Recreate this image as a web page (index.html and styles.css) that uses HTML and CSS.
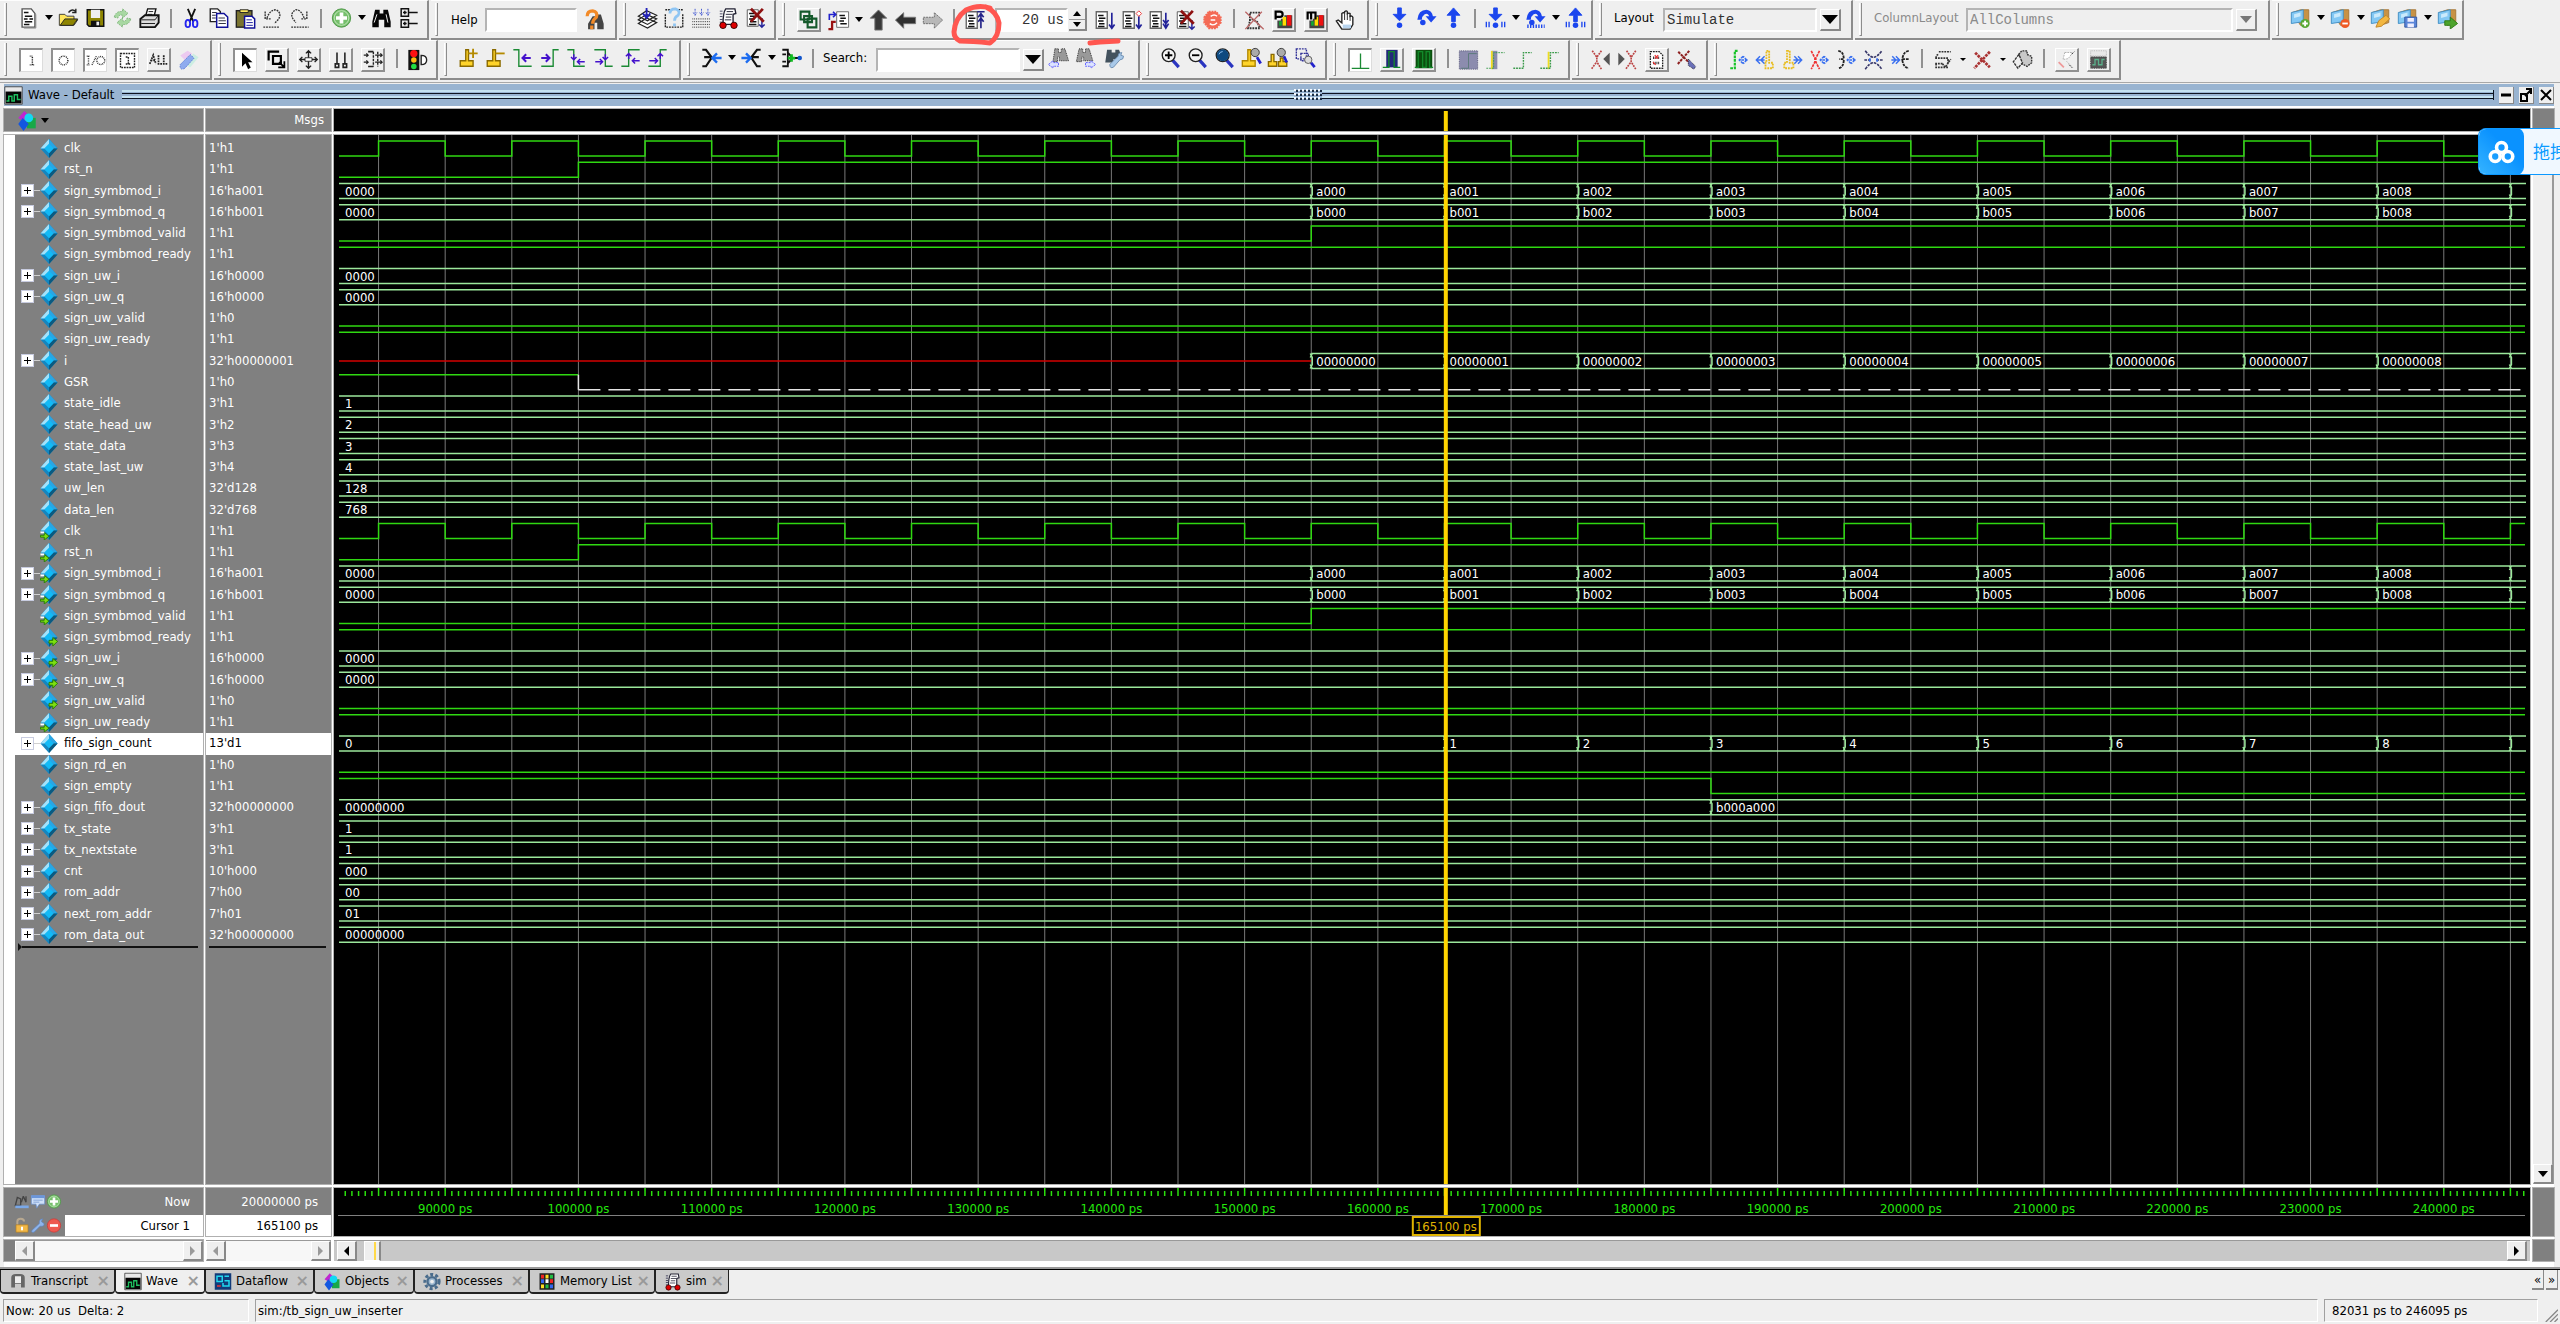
FILE: index.html
```html
<!DOCTYPE html>
<html lang="en">
<head>
<meta charset="utf-8">
<title>Wave - Default</title>
<link rel="stylesheet" href="styles.css">
</head>
<body>
<svg class="defs" aria-hidden="true">
  <symbol id="doc" viewBox="0 0 24 24"><path d="M5 2h10l4 5v15H5z" fill="#fff" stroke="#555" stroke-width="1.5"/><path d="M20 8v15H7" stroke="#888" fill="none"/><path d="M7 6h5M8 10h8M7 13h4m2 0h4M8 16h8M7 19h6" stroke="#111" stroke-width="1.6"/></symbol>
  <symbol id="open" viewBox="0 0 24 24"><path d="M2 20V8h6l2 2h8v4h4l-4 6z" fill="#ffe65a" stroke="#333"/><path d="M3 20l5-7h14l-5 7z" fill="#8d8400" stroke="#222"/><path d="M12 6q4-5 8-1m0-3v4h-4" fill="none" stroke="#222" stroke-width="1.5"/></symbol>
  <symbol id="save" viewBox="0 0 24 24"><path d="M3 3h18v18H5l-2-2z" fill="#8d8400" stroke="#111" stroke-width="1.6"/><path d="M7 3h10v9H7z" fill="#eee"/><path d="M7 15h10v6H7z" fill="#111"/><path d="M13 16h3v4h-3z" fill="#eee"/></symbol>
  <symbol id="reload" viewBox="0 0 24 24"><path d="M3 11q2-7 9-6V2l6 5-6 5V9q-4-1-5 3zM21 13q-2 7-9 6v3l-6-5 6-5v3q4 1 5-3z" fill="#a8d8a2" stroke="#7eb57a" stroke-dasharray="2 1"/></symbol>
  <symbol id="print" viewBox="0 0 24 24"><path d="M8 9l2-7h9l-2 8z" fill="#fff" stroke="#111" stroke-width="1.5"/><path d="M2 13l5-4h15v8l-4 5H2z" fill="#ddd" stroke="#111" stroke-width="2"/><path d="M3 14h15l3-4M3 18h15M11 5h5m-6 3h5" stroke="#111" fill="none"/></symbol>
  <symbol id="cut" viewBox="0 0 24 24"><path d="M8 2l6 14M16 2l-6 14" stroke="#111" stroke-width="2"/><ellipse cx="8" cy="18" rx="2.500" ry="4" fill="none" stroke="#22e" stroke-width="2"/><ellipse cx="16" cy="18" rx="2.500" ry="4" fill="none" stroke="#22e" stroke-width="2"/></symbol>
  <symbol id="copy" viewBox="0 0 24 24"><path d="M3 2h8l3 3v11H3z" fill="#fff" stroke="#222" stroke-width="1.500"/><path d="M10 7h8l4 4v11H10z" fill="#fff" stroke="#119" stroke-width="1.600"/><path d="M5 6h5M5 9h4M5 12h4M12 12h7M12 15h8M12 18h8" stroke="#223"/></symbol>
  <symbol id="paste" viewBox="0 0 24 24"><rect x="2" y="4" width="17" height="18" fill="#7a7430" stroke="#222" stroke-width="1.500"/><path d="M6 6V3h9v3z" fill="#ffea60" stroke="#222"/><path d="M11 10h8l3 3v10H11z" fill="#fff" stroke="#119" stroke-width="1.600"/><path d="M13 14h6M13 17h7M13 20h7" stroke="#119"/></symbol>
  <symbol id="undo" viewBox="0 0 24 24"><path d="M6 12q3-9 10-9 7 4 2 11l-4 4M4 5v8h6M2 22h17" fill="none" stroke="#333" stroke-width="1.500" stroke-dasharray="2 1"/></symbol>
  <symbol id="redo" viewBox="0 0 24 24"><path d="M17 12q-3-9-9-9-7 4-3 10l3 4M20 5v8h-6M3 22h19" fill="none" stroke="#333" stroke-width="1.500" stroke-dasharray="2 1"/></symbol>
  <symbol id="add" viewBox="0 0 24 24"><circle cx="12" cy="12" r="10" fill="#76bf6c" stroke="#4b9645"/><circle cx="12" cy="12" r="8" fill="none" stroke="#c4e8bd"/><path d="M12 6v12M6 12h12" stroke="#fff" stroke-width="4"/></symbol>
  <symbol id="find" viewBox="0 0 24 24"><path d="M5 3h5v4h4V3h5l3 13v6h-7v-8H9v8H2v-6z" fill="#050505"/><path d="M7 8l-3 9m13-9l2 9" stroke="#fff"/></symbol>
  <symbol id="tree" viewBox="0 0 24 24"><path d="M4 2h8v8H4zM4 14h8v8H4zM12 6h10M12 18h10M8 4v4M6 6h4M8 16v4M6 18h4" fill="none" stroke="#111" stroke-width="1.600"/></symbol>
  <symbol id="findhelp" viewBox="0 0 24 24"><path d="M10 8h4V6h5l3 10v6h-7v-7h-3v7H5v-6z" fill="#444"/><path d="M4 8q0-6 6-6 6 1 4 7-4 3-4 7m-1 2v4" fill="none" stroke="#f28a28" stroke-width="3.500"/></symbol>
  <symbol id="stack" viewBox="0 0 24 24"><path d="M2 18l9-6 11 5-10 6zM2 14l9-6 11 5-10 6zM2 10l9-6 11 5-10 6z" fill="#fff" stroke="#222" stroke-width="1.300"/><path d="M11 1v10m-4-4l4 5 4-5" stroke="#22b" fill="none" stroke-width="2"/></symbol>
  <symbol id="dq" viewBox="0 0 24 24"><path d="M2 8v14h19V8M2 3h6M16 3h6" fill="none" stroke="#222" stroke-dasharray="2 1" stroke-width="1.500"/><path d="M7 7q0-5 6-5 6 2 3 7-4 2-4 6m0 3v3" fill="none" stroke="#8fc5f3" stroke-width="3"/></symbol>
  <symbol id="gridarrows" viewBox="0 0 24 24"><path d="M5 2v7M12 2v7M19 2v7M3 6l2 3 2-3m3 0l2 3 2-3m3 0l2 3 2-3" fill="none" stroke="#3a50d0" stroke-dasharray="2 1"/><path d="M2 13h20M2 16h20M2 19h20M2 22h20" stroke="#222" stroke-dasharray="1 1"/></symbol>
  <symbol id="car" viewBox="0 0 24 24"><path d="M9 2h10l1 5-3 1v11H6q0-13 3-17z" fill="#fff" stroke="#223" stroke-width="1.500"/><path d="M10 5h7M9 8h7M9 11h6M8 14h7" stroke="#223"/><path d="M4 4v14" stroke="#224" stroke-dasharray="1 2" stroke-width="3"/><circle cx="6" cy="20" r="3.500" fill="#d00" stroke="#300"/><circle cx="18" cy="20" r="3.500" fill="#d00" stroke="#300"/></symbol>
  <symbol id="docx" viewBox="0 0 24 24"><path d="M3 3h12v18H3z" fill="#fff" stroke="#555"/><path d="M5 7h6M6 10h7M5 13h6M6 16h7M5 19h8" stroke="#111" stroke-width="1.600"/><path d="M19 12v10m-3-3l3 3 3-3" stroke="#229" fill="none" stroke-width="1.600"/><path d="M7 2l14 14M20 2L7 16" stroke="#8e1010" stroke-width="3"/></symbol>
  <symbol id="boxes" viewBox="0 0 24 24"><path d="M3 3h10v9H3zM11 11h10v10H11zM7 8h9v7H7z" fill="none" stroke="#155a2c" stroke-width="2.400"/></symbol>
  <symbol id="sigdoc" viewBox="0 0 24 24"><path d="M10 3h13v17H10z" fill="#fff" stroke="#666"/><path d="M13 7h6M14 10h6M13 13h5M14 16h7" stroke="#111" stroke-width="1.600"/><path d="M2 12V6h6m-2-3l3 3-3 3" stroke="#22c" fill="none" stroke-width="1.800"/><path d="M1 22h4v-8h4" stroke="#911" fill="none" stroke-width="2.500"/></symbol>
  <symbol id="up" viewBox="0 0 24 24"><path d="M12 1l9 9h-5v13H8V10H3z" fill="#383838" stroke="#777"/></symbol>
  <symbol id="left" viewBox="0 0 24 24"><path d="M1 12l9-8v5h13v7H10v5z" fill="#303030" stroke="#777"/></symbol>
  <symbol id="right" viewBox="0 0 24 24"><path d="M23 12l-9-8v5H2v7h12v5z" fill="#b8b8b8" stroke="#666" stroke-dasharray="2 1"/></symbol>
  <symbol id="page" viewBox="0 0 24 24"><path d="M3 3h12v18H3z" fill="#fff" stroke="#666" stroke-width="1.500"/><path d="M5 7h6M6 10h7M5 13h6M6 16h6M5 19h7" stroke="#111" stroke-width="1.600"/></symbol>
  <symbol id="restart" viewBox="0 0 24 24"><use href="#page"/><path d="M19 21V5M15 3h8M16 9l3-4 3 4M16 14l3-4 3 4" stroke="#228" fill="none" stroke-width="1.800"/></symbol>
  <symbol id="run" viewBox="0 0 24 24"><use href="#page"/><path d="M20 4v17m-3-4l3 4 3-4" stroke="#229" fill="none" stroke-width="1.800"/></symbol>
  <symbol id="runc" viewBox="0 0 24 24"><use href="#page"/><path d="M20 8v13m-3-4l3 4 3-4" stroke="#229" fill="none" stroke-width="1.800"/><path d="M20 2l3 3-3 3-3-3z" fill="#fff" stroke="#e33"/></symbol>
  <symbol id="runall" viewBox="0 0 24 24"><use href="#page"/><path d="M20 4v17m-3-9l3 4 3-4m-6 4l3 5 3-5" stroke="#229" fill="none" stroke-width="1.800"/></symbol>
  <symbol id="stop" viewBox="0 0 24 24"><path d="M8 3h8l5 6v6l-5 6H8l-5-6V9z" fill="#f46a55" stroke="#f46a55" stroke-dasharray="2 1" stroke-width="2"/><path d="M17 8q-3-3-7 0m0 4h5m-6 4q4 3 8-1" stroke="#fff" fill="none" stroke-width="1.500"/></symbol>
  <symbol id="noprof" viewBox="0 0 24 24"><path d="M17 8V4H7v9l-2 8h13l-3-7-6-3" fill="none" stroke="#333" stroke-width="2" stroke-dasharray="2 1"/><path d="M2 3l20 19M20 3L2 22" stroke="#b66" stroke-width="1.400"/></symbol>
  <symbol id="bars" viewBox="0 0 24 24"><path d="M5 13h4v-2h4V7h9v15H5z" fill="#444"/><path d="M7 14h3v5H7z" fill="#1a3"/><path d="M11 9h4v10h-4z" fill="#fd0"/><path d="M16 7h5v12h-5z" fill="#e11"/></symbol>
  <symbol id="profp" viewBox="0 0 24 24"><use href="#bars"/><path d="M3 12V3h5q3 0 3 3t-3 3H4" stroke="#000" fill="none" stroke-width="2.500"/></symbol>
  <symbol id="profm" viewBox="0 0 24 24"><use href="#bars"/><path d="M3 12V4h9v8M7 4v8" stroke="#000" fill="none" stroke-width="2.500"/></symbol>
  <symbol id="hand" viewBox="0 0 24 24"><path d="M8 22L2 13l2-1 4 3V5q2-2 3 0V3q2-2 3 0v2q2-1 3 0v3q2-1 3 1v8l-3 5z" fill="#fff" stroke="#222" stroke-width="1.500"/><path d="M11 5v7M14 5v7M17 7v6" stroke="#222"/><path d="M9 17h9v4H9z" fill="#b8d4ee"/></symbol>
  <symbol id="stepin" viewBox="0 0 24 24"><path d="M10 1h4v7h5l-7 7-7-7h5z" fill="#1c46ee" stroke="#1c46ee"/><circle cx="12" cy="20" r="3" fill="#1c46ee"/></symbol>
  <symbol id="stepover" viewBox="0 0 24 24"><path d="M2 14Q3 3 12 3q6 1 7 7h4l-6 7-6-7h4q-2-4-5-2-3 2-3 6z" fill="#1c46ee"/><circle cx="8" cy="17" r="3" fill="#1c46ee"/></symbol>
  <symbol id="stepout" viewBox="0 0 24 24"><path d="M10 16V9H5l7-8 7 8h-5v7z" fill="#1c46ee" stroke="#1c46ee"/><circle cx="12" cy="20" r="3" fill="#1c46ee"/></symbol>
  <symbol id="ticks" viewBox="0 0 24 24"><path d="M2 16v6M5 16v6M19 16v6M22 16v6" stroke="#1c46ee" stroke-width="1.500"/></symbol>
  <symbol id="stepinc" viewBox="0 0 24 24"><use href="#stepin"/><use href="#ticks"/></symbol>
  <symbol id="stepoverc" viewBox="0 0 24 24"><use href="#stepover"/><path d="M3 21h19" stroke="#1c46ee" stroke-width="4" stroke-dasharray="1.500 1.500"/></symbol>
  <symbol id="stepoutc" viewBox="0 0 24 24"><use href="#stepout"/><use href="#ticks"/></symbol>
  <symbol id="fold" viewBox="0 0 24 24"><path d="M3 6l9-3h9v14l-9 3z" fill="#c79245" stroke="#a57534"/><path d="M2 6l13-3v13L2 18z" fill="#83c8f4" stroke="#3d8cc4"/><path d="M5 8l7-2v4L5 12z" fill="#caeafc"/></symbol>
  <symbol id="fadd" viewBox="0 0 24 24"><use href="#fold"/><circle cx="17" cy="18" r="5" fill="#58a834"/><path d="M17 15v6m-3-3h6" stroke="#fff" stroke-width="2"/></symbol>
  <symbol id="fdel" viewBox="0 0 24 24"><use href="#fold"/><circle cx="17" cy="18" r="5" fill="#ee5a25"/><path d="M14 18h6" stroke="#fff" stroke-width="2"/></symbol>
  <symbol id="fedit" viewBox="0 0 24 24"><use href="#fold"/><path d="M7 22l3-7 8-6 4 4-9 8z" fill="#f2b640" stroke="#c08527"/></symbol>
  <symbol id="fsave" viewBox="0 0 24 24"><use href="#fold"/><path d="M9 11h13v11H9z" fill="#5a85d8" stroke="#3055a0"/><path d="M12 12h7v4h-7zM12 18h7v4h-7z" fill="#eef"/></symbol>
  <symbol id="fgo" viewBox="0 0 24 24"><use href="#fold"/><path d="M9 15h6v-4l8 7-8 6v-4H9z" fill="#4da32c" stroke="#2e7a14"/></symbol>
  <symbol id="li" viewBox="0 0 24 24"><path d="M10 7h3v10m-3 0h6" fill="none" stroke="#222" stroke-dasharray="1 1" stroke-width="1.600"/></symbol>
  <symbol id="lo" viewBox="0 0 24 24"><circle cx="12" cy="12" r="5" fill="none" stroke="#222" stroke-dasharray="1 1" stroke-width="1.600"/></symbol>
  <symbol id="lio" viewBox="0 0 24 24"><path d="M2 7h4M4 7v10M2 17h4M8 17l5-10" stroke="#222" stroke-dasharray="1 1" stroke-width="1.600"/><circle cx="18" cy="12" r="4.500" fill="none" stroke="#222" stroke-dasharray="1 1" stroke-width="1.600"/></symbol>
  <symbol id="lbox" viewBox="0 0 24 24"><path d="M4 4h16v16H4zM10 8h3v8m-3 0h6" fill="none" stroke="#222" stroke-dasharray="2 1" stroke-width="1.600"/></symbol>
  <symbol id="lall" viewBox="0 0 24 24"><path d="M2 17l4-10 3 10M3 13h5M12 7v10h4M18 7v10h4" fill="none" stroke="#222" stroke-dasharray="2 1" stroke-width="2"/></symbol>
  <symbol id="pen" viewBox="0 0 24 24"><path d="M3 7l8-5 5 3-8 7z" fill="#eccaf0"/><path d="M17 5l6 4-9 11-4-2z" fill="#cdeee2"/><path d="M3 17L14 6l4 4L8 21q-6 3-5-4z" fill="#8eabef" stroke="#5d7cd4" stroke-dasharray="2 1"/></symbol>
  <symbol id="arrow" viewBox="0 0 24 24"><path d="M8 3v16l4-4 3 7 3-2-3-6h5z" fill="#000"/></symbol>
  <symbol id="zbox" viewBox="0 0 24 24"><path d="M3 13V3h12M8 8h9v9H8z" fill="none" stroke="#000" stroke-width="2.500"/><path d="M15 15l6 6m0-7v7h-7" stroke="#000" fill="none" stroke-width="2"/></symbol>
  <symbol id="pan" viewBox="0 0 24 24"><path d="M12 2v20M2 12h20M9 5l3-3 3 3M9 19l3 3 3-3M5 9l-3 3 3 3M19 9l3 3-3 3" fill="none" stroke="#222" stroke-width="1.600"/><path d="M8 10h8v4H8z" fill="#fff" stroke="#222"/></symbol>
  <symbol id="twocur" viewBox="0 0 24 24"><path d="M8 4v12M17 4v12M6 17h4v4H6zM15 17h4v4h-4z" fill="none" stroke="#222" stroke-width="1.800"/></symbol>
  <symbol id="editm" viewBox="0 0 24 24"><path d="M7 3h6M7 20h6" fill="none" stroke="#222" stroke-width="1.800"/><path d="M13 3v17M18 3v17" stroke="#222" stroke-width="1.600" stroke-dasharray="3 1"/><path d="M2 7h5m-2-2l2 2-2 2M2 15h5m-2-2l2 2-2 2M15 7h8m-2-2l2 2-2 2M15 15h8m-2-2l2 2-2 2" stroke="#222" stroke-width="1.400" fill="none"/></symbol>
  <symbol id="traffic" viewBox="0 0 24 24"><path d="M2 1h12v22H2z" fill="#111"/><circle cx="8" cy="5" r="4" fill="#f11"/><circle cx="8" cy="12" r="3" fill="#fb1"/><circle cx="8" cy="19" r="3" fill="#2d4"/><path d="M16 7q6 0 6 5t-6 5z" fill="#fff" stroke="#222" stroke-width="1.500"/></symbol>
  <symbol id="cur" viewBox="0 0 24 24"><path d="M9 3h3v12h5v6H3v-6h6z" fill="#ffd42a" stroke="#8a6a00" stroke-width="1.500"/></symbol>
  <symbol id="curadd" viewBox="0 0 24 24"><use href="#cur"/><path d="M12 7h10M17 2v10" stroke="#b48a00" stroke-width="2"/></symbol>
  <symbol id="curdel" viewBox="0 0 24 24"><use href="#cur"/><path d="M12 7h10" stroke="#b48a00" stroke-width="2"/></symbol>
  <symbol id="e1" viewBox="0 0 24 24"><path d="M2 3h6v18h14" fill="none" stroke="#1b8a34" stroke-width="1.500"/><path d="M12 12h9m-5-4l-4 4 4 4" stroke="#41c" fill="none" stroke-width="2.200"/></symbol>
  <symbol id="e2" viewBox="0 0 24 24"><path d="M22 3h-6v18H3" fill="none" stroke="#1b8a34" stroke-width="1.500"/><path d="M3 12h9m-4-4l4 4-4 4" stroke="#41c" fill="none" stroke-width="2.200"/></symbol>
  <symbol id="e3" viewBox="0 0 24 24"><path d="M2 3h7v18h12" fill="none" stroke="#1b8a34" stroke-width="1.500"/><path d="M9 8v6m-3-3l3 3 3-3M21 16h-8m3-3l-3 3 3 3" stroke="#41c" fill="none" stroke-width="1.600"/></symbol>
  <symbol id="e4" viewBox="0 0 24 24"><path d="M2 3h12v18h8" fill="none" stroke="#1b8a34" stroke-width="1.500"/><path d="M14 8v6m-3-3l3 3 3-3M3 16h8m-3-3l3 3-3 3" stroke="#41c" fill="none" stroke-width="1.600"/></symbol>
  <symbol id="e5" viewBox="0 0 24 24"><path d="M22 3H10v18H2" fill="none" stroke="#1b8a34" stroke-width="1.500"/><path d="M10 13V7m-3 3l3-3 3 3M22 15h-8m3-3l-3 3 3 3" stroke="#41c" fill="none" stroke-width="1.600"/></symbol>
  <symbol id="e6" viewBox="0 0 24 24"><path d="M22 3h-7v18H2" fill="none" stroke="#1b8a34" stroke-width="1.500"/><path d="M15 13V7m-3 3l3-3 3 3M3 15h9m-3-3l3 3-3 3" stroke="#41c" fill="none" stroke-width="1.600"/></symbol>
  <symbol id="x1" viewBox="0 0 24 24"><path d="M2 3h4l6 8H4m8 1l-6 9H2" fill="none" stroke="#111" stroke-width="2.400"/><path d="M23 12h-9m4-5l-5 5 5 5" stroke="#1c6cf0" fill="none" stroke-width="2.600"/></symbol>
  <symbol id="x2" viewBox="0 0 24 24"><path d="M22 3h-4l-6 8h8m-8 1l6 9h4" fill="none" stroke="#111" stroke-width="2.400"/><path d="M1 12h9M6 7l5 5-5 5" stroke="#1c6cf0" fill="none" stroke-width="2.600"/></symbol>
  <symbol id="x3" viewBox="0 0 24 24"><path d="M2 3h6v18H2M2 8h4M2 16h4M8 6l5 6-5 6M15 12h5" fill="none" stroke="#111" stroke-width="2"/><path d="M12 8v8m-4-4h8" stroke="#1b2" stroke-width="3"/><circle cx="21" cy="12" r="2.500" fill="#15c"/></symbol>
  <symbol id="fprev" viewBox="0 0 24 24"><path d="M8 2h4v4h3V2h4l4 13H13v-4h-2v5H6z" fill="#999" stroke="#222" stroke-dasharray="1 1"/><path d="M1 19l5-4v2h6v4H6v2z" fill="#dde4ff" stroke="#55f" stroke-dasharray="2 1"/></symbol>
  <symbol id="fnext" viewBox="0 0 24 24"><path d="M5 2h4v4h3V2h4l4 13H10v-4H8v5H2z" fill="#999" stroke="#222" stroke-dasharray="1 1"/><path d="M23 19l-5-4v2h-6v4h6v2z" fill="#dde4ff" stroke="#55f" stroke-dasharray="2 1"/></symbol>
  <symbol id="fopt" viewBox="0 0 24 24"><path d="M5 3h5v3h4V3h4l4 10H12v4H3z" fill="#43525e"/><path d="M8 19l9-9q0-4 4-4l-1 3 3 1q0 4-4 4l-7 8q-4 2-4-3z" fill="#a9c9e9" stroke="#6c8db0"/></symbol>
  <symbol id="mag" viewBox="0 0 24 24"><path d="M14 14l7 8" stroke="#2a35c0" stroke-width="3.500"/><circle cx="10" cy="9" r="7" fill="#f4f4f4" stroke="#222" stroke-width="1.500"/></symbol>
  <symbol id="zin" viewBox="0 0 24 24"><use href="#mag"/><path d="M10 5v8M6 9h8" stroke="#000" stroke-width="2"/></symbol>
  <symbol id="zout" viewBox="0 0 24 24"><use href="#mag"/><path d="M6 9h8" stroke="#000" stroke-width="2"/></symbol>
  <symbol id="zfull" viewBox="0 0 24 24"><use href="#mag"/><circle cx="10" cy="9" r="6.500" fill="#0d4a80"/><path d="M6 8q1-3 4-3" stroke="#9cf" fill="none"/></symbol>
  <symbol id="zcur" viewBox="0 0 24 24"><path d="M8 3h3v12h5v6H2v-6h6z" fill="#ffd42a" stroke="#b08600" stroke-width="1.500"/><path d="M18 11l4 7" stroke="#22c" stroke-width="3"/><circle cx="16" cy="6" r="4.500" fill="#aaa" stroke="#333"/></symbol>
  <symbol id="zbet" viewBox="0 0 24 24"><path d="M4 8h3v8h3v5H1v-5h3zM14 12h3v4h4v5h-9v-5h2z" fill="#ffd42a" stroke="#8a6a00" stroke-width="1.500"/><path d="M18 10l3 7" stroke="#22c" stroke-width="3"/><circle cx="15" cy="6" r="4.500" fill="#aaa" stroke="#333"/></symbol>
  <symbol id="zoth" viewBox="0 0 24 24"><path d="M2 2h11v11H2zM7 7h8v8H7z" fill="none" stroke="#339" stroke-dasharray="2 1" stroke-width="1.500"/><path d="M18 17l4 5" stroke="#22c" stroke-width="3"/><circle cx="15" cy="14" r="4" fill="#ddd" stroke="#555"/></symbol>
  <symbol id="w1" viewBox="0 0 24 24"><path d="M2 21h20M12 4v17" stroke="#1b8a34" stroke-width="1.500"/></symbol>
  <symbol id="w2" viewBox="0 0 24 24"><path d="M6 1h13v20H6z" fill="#23287a"/><path d="M2 21h7V3h6v18h7" stroke="#128a2a" stroke-width="1.500" fill="none"/></symbol>
  <symbol id="w3" viewBox="0 0 24 24"><path d="M3 1h19v21H3z" fill="#0b4f0e"/><path d="M2 21h4V3h5v18h4V3h4v18h4" stroke="#128a2a" stroke-width="1.500" fill="none"/></symbol>
  <symbol id="w4" viewBox="0 0 24 24"><path d="M2 2h20v20H2z" fill="#8c8cae" stroke="#557" stroke-dasharray="1 1"/><path d="M4 21h8V5h9" fill="none" stroke="#5a7a78"/></symbol>
  <symbol id="w5" viewBox="0 0 24 24"><path d="M8 2h6v20H8z" fill="#8c8cae"/><path d="M8 2v20" stroke="#ed2" stroke-width="2"/><path d="M2 21h8V4h12" fill="none" stroke="#3a9a4a" stroke-dasharray="2 1"/></symbol>
  <symbol id="w6" viewBox="0 0 24 24"><path d="M2 21h11V4h9" fill="none" stroke="#3a9a4a" stroke-dasharray="2 1" stroke-width="1.500"/></symbol>
  <symbol id="w7" viewBox="0 0 24 24"><path d="M11 3v19" stroke="#ed2" stroke-width="2"/><path d="M2 21h11V4h9" fill="none" stroke="#3a9a4a" stroke-dasharray="2 1" stroke-width="1.500"/></symbol>
  <symbol id="xl" viewBox="0 0 24 24"><path d="M3 2l5 7v5l-6 8M13 2L8 9v5l5 8" fill="none" stroke="#b44" stroke-dasharray="2 1" stroke-width="1.800"/><path d="M22 4v14l-7-7z" fill="#555"/></symbol>
  <symbol id="xr" viewBox="0 0 24 24"><path d="M11 2l5 7v5l-6 8M21 2l-5 7v5l5 8" fill="none" stroke="#b44" stroke-dasharray="2 1" stroke-width="1.800"/><path d="M2 4v14l7-7z" fill="#555"/></symbol>
  <symbol id="dx" viewBox="0 0 24 24"><path d="M5 3h10l4 4v15H5z" fill="#fff" stroke="#222" stroke-dasharray="2 1" stroke-width="1.500"/><path d="M8 10h8M8 16h8" stroke="#222" stroke-dasharray="1 1" stroke-width="3"/><path d="M10 7l4 4m0-4l-4 4m-2 4l3 3" stroke="#e33" stroke-width="1.500"/></symbol>
  <symbol id="xp" viewBox="0 0 24 24"><path d="M3 3l12 12M15 2L2 17" stroke="#8e2020" stroke-dasharray="3 1" stroke-width="2.200"/><path d="M14 11l8 8-2 3-6-4z" fill="#6a70b8" stroke="#223" stroke-dasharray="1 1"/></symbol>
  <symbol id="bl" viewBox="0 0 24 24"><path d="M22 12h-9m4-4l-4 4 4 4m4-4l-4 4m4-4l-4-4" fill="none" stroke="#3a70f0" stroke-width="1.800" stroke-dasharray="3 1"/></symbol>
  <symbol id="k1" viewBox="0 0 24 24"><use href="#bl"/><path d="M11 2H8v19H3" fill="none" stroke="#19c32a" stroke-width="2.400" stroke-dasharray="3 1"/></symbol>
  <symbol id="k2" viewBox="0 0 24 24"><path d="M2 12h9M6 8l-4 4 4 4m5-8l-4 4 4 4" fill="none" stroke="#3a70f0" stroke-width="1.600"/><path d="M13 2h3v13h4v6h-8v-6h1z" fill="none" stroke="#e8bd20" stroke-dasharray="2 1" stroke-width="2"/></symbol>
  <symbol id="k3" viewBox="0 0 24 24"><path d="M13 12h9m-4-4l4 4-4 4m-4-8l4 4-4 4" fill="none" stroke="#3a70f0" stroke-width="1.600"/><path d="M6 2h3v13h4v6H3v-6h3z" fill="none" stroke="#e8bd20" stroke-dasharray="2 1" stroke-width="2"/></symbol>
  <symbol id="k4" viewBox="0 0 24 24"><use href="#bl"/><path d="M3 2l4 8v4l-4 8M12 2L8 10v4l4 8" fill="none" stroke="#e33" stroke-dasharray="3 1" stroke-width="1.800"/></symbol>
  <symbol id="k5" viewBox="0 0 24 24"><use href="#bl"/><path d="M3 2q6 1 6 9H4m5 1q0 8-6 9" fill="none" stroke="#222" stroke-dasharray="3 1" stroke-width="2"/></symbol>
  <symbol id="k6" viewBox="0 0 24 24"><path d="M3 2q5 7 9 7t9-7M3 22q5-7 9-7t9 7M2 12h7m6 0h7" fill="none" stroke="#336" stroke-dasharray="3 1" stroke-width="1.800"/><path d="M8 10v4m8-4v4" stroke="#3a70f0" stroke-width="2"/></symbol>
  <symbol id="k7" viewBox="0 0 24 24"><path d="M2 12h9M7 8l4 4-4 4M3 8l4 4-4 4" fill="none" stroke="#3a70f0" stroke-width="1.600"/><path d="M21 2q-6 1-7 9h7m-7 1q1 8 7 9" fill="none" stroke="#222" stroke-dasharray="3 1" stroke-width="2"/></symbol>
  <symbol id="loop" viewBox="0 0 24 24"><path d="M8 3h13M5 10q0-4 3-4M4 10h14v6M4 16h9m-8 0v4h13m-6-4l3 4 6-9" fill="none" stroke="#333" stroke-dasharray="2 1" stroke-width="1.800"/></symbol>
  <symbol id="bigx" viewBox="0 0 24 24"><path d="M4 4l16 16M20 3L3 21" stroke="#a33" stroke-width="3" stroke-dasharray="3 1"/></symbol>
  <symbol id="gear" viewBox="0 0 24 24"><path d="M8 6l3-4h6v4l5 2v7l-5 4-6-3z" fill="#c8c8c8" stroke="#333" stroke-dasharray="2 1" stroke-width="1.500"/><path d="M8 6l-6 8 5 7 5-6z" fill="#eee" stroke="#333" stroke-dasharray="3 1" stroke-width="1.500"/></symbol>
  <symbol id="m1" viewBox="0 0 24 24"><path d="M10 4h9l-5 7-6 1zM12 14l7 7" fill="#fff" stroke="#aaa" stroke-dasharray="2 1"/><path d="M3 15l6 6" stroke="#e99" stroke-width="2"/><path d="M15 18l4 4m-1-16l3-3" stroke="#333" stroke-dasharray="2 1"/></symbol>
  <symbol id="m2" viewBox="0 0 24 24"><path d="M3 2h18v6H3z" fill="#e8e8e8" stroke="#aaa" stroke-dasharray="1 1"/><path d="M3 9h18v13H3z" fill="#555" stroke="#333" stroke-dasharray="1 1"/><path d="M5 18h3v-6h4v6h4v-6h3" stroke="#5ab08a" fill="none" stroke-width="1.500"/></symbol>
  <symbol id="wave" viewBox="0 0 24 24"><path d="M1 1h22v22H1z" fill="#e8e8e8" stroke="#333"/><path d="M2 7h20v15H2z" fill="#050505"/><path d="M3 19h3v-6h4v6h3v-8h4v6h4" stroke="#1fc060" fill="none" stroke-width="1.800"/></symbol>
  <symbol id="objs" viewBox="0 0 24 24"><path d="M9 1l6 6-8 5-5-3z" fill="#c026d0"/><path d="M12 9h10v12H12z" fill="#18a848"/><circle cx="14" cy="9" r="5" fill="#12d8f4"/><path d="M7 9l7 7-6 8-6-8z" fill="#1257e0"/></symbol>
  <symbol id="trans" viewBox="0 0 24 24"><path d="M3 20V7q0-5 6-5h6q6 0 6 5v13h-5v-5H8v5z" fill="#666"/><path d="M8 5h8v9H8z" fill="#eee"/></symbol>
  <symbol id="flow" viewBox="0 0 24 24"><path d="M1 1h22v22H1z" fill="#123a78"/><path d="M4 5h7v7H4zM14 5h6M14 11h6v7h-8v-4" fill="none" stroke="#20d8f0" stroke-width="2"/><path d="M4 18h5" stroke="#e33" stroke-width="2"/></symbol>
  <symbol id="cog" viewBox="0 0 24 24"><circle cx="12" cy="12" r="9.500" fill="none" stroke="#4a6c8c" stroke-width="4" stroke-dasharray="4 3"/><circle cx="12" cy="12" r="6" fill="#9db8d0" stroke="#4a6c8c" stroke-width="3"/><circle cx="12" cy="12" r="2.500" fill="#eee"/></symbol>
  <symbol id="mem" viewBox="0 0 24 24"><path d="M2 1h20v22H2z" fill="#222"/><path d="M4 3h4v5H4zM16 9h4v5h-4z" fill="#e22"/><path d="M10 3h4v5h-4zM4 16h4v5H4z" fill="#fd2"/><path d="M16 3h4v5h-4zM10 16h4v5h-4z" fill="#2b4"/><path d="M4 9h4v5H4zM16 16h4v5h-4z" fill="#36e"/><path d="M10 9h4v5h-4z" fill="#fff"/></symbol>
  <symbol id="lib" viewBox="0 0 24 24"><path d="M2 18h8V8L5 6z" fill="none" stroke="#444" stroke-width="2"/><path d="M14 4l-3 9m3-9l4 9m0-9v9" fill="none" stroke="#444" stroke-width="2"/><path d="M2 20h20" stroke="#7aa8e8" stroke-width="4"/></symbol>
  <symbol id="note" viewBox="0 0 24 24"><path d="M2 3h20v13H14l-4 6-1-6H2z" fill="#cfe0f8" stroke="#5f88c8"/><path d="M2 3h20v4H2z" fill="#6b95d8"/><path d="M5 10h14M5 13h9" stroke="#5f88c8"/></symbol>
  <symbol id="lock" viewBox="0 0 24 24"><path d="M5 11V6q0-4 5-4t5 4" fill="none" stroke="#b8a890" stroke-width="3"/><path d="M3 11h18v11H3z" fill="#f2b848" stroke="#b47e20"/><path d="M12 14v5" stroke="#fff" stroke-width="3"/></symbol>
  <symbol id="wrench" viewBox="0 0 24 24"><path d="M3 19L14 9q-1-6 5-7l-2 4 4 3q1 5-6 4L6 22q-5 1-3-3z" fill="#8fb4ea" stroke="#5b84c0"/></symbol>
  <symbol id="minus" viewBox="0 0 24 24"><circle cx="12" cy="12" r="10" fill="#ee5a50" stroke="#c33"/><path d="M6 12h12" stroke="#fff" stroke-width="4"/></symbol>
  <symbol id="dia" viewBox="0 0 18 20"><path d="M9 0l9 10-9 10-9-10z" fill="#1486c0"/><path d="M9 0v6l-4 4H0z" fill="#a4e2fa"/><path d="M9 0l9 10h-5L9 6z" fill="#2aa6e4"/><path d="M9 20v-5l4-5h5z" fill="#0b5a80"/><path d="M9 5l5 5-5 5-5-5z" fill="#12baf6"/></symbol>
  <symbol id="dia-in" viewBox="0 0 18 20"><use href="#dia"/><path d="M0 15h4v-3l5 4-5 4v-3H0z" fill="#7ce010" stroke="#277a06"/><path d="M0 12h4" stroke="#fff" stroke-width="2"/></symbol>
  <symbol id="dia-out" viewBox="0 0 18 20"><use href="#dia"/><path d="M9 13h4v-3l5 4-5 5v-3H9z" fill="#7ce010" stroke="#277a06"/></symbol>
</svg>

<header class="toolbars">
  <div class="bar bar-top">
    <div class="group raised"><i class="grip"></i>
      <button class="tb" aria-label="New"><svg><use href="#doc"/></svg></button><button class="drop" aria-label="New menu"></button>
      <button class="tb" aria-label="Open"><svg><use href="#open"/></svg></button><button class="tb" aria-label="Save"><svg><use href="#save"/></svg></button><button class="tb" aria-label="Reload"><svg><use href="#reload"/></svg></button><button class="tb" aria-label="Print"><svg><use href="#print"/></svg></button><i class="sep"></i>
      <button class="tb" aria-label="Cut"><svg><use href="#cut"/></svg></button><button class="tb" aria-label="Copy"><svg><use href="#copy"/></svg></button><button class="tb" aria-label="Paste"><svg><use href="#paste"/></svg></button><button class="tb" aria-label="Undo"><svg><use href="#undo"/></svg></button><button class="tb" aria-label="Redo"><svg><use href="#redo"/></svg></button><i class="sep"></i>
      <button class="tb" aria-label="Add"><svg><use href="#add"/></svg></button><button class="drop" aria-label="Add menu"></button><button class="tb" aria-label="Find"><svg><use href="#find"/></svg></button><button class="tb" aria-label="Collapse"><svg><use href="#tree"/></svg></button>
    </div>
    <div class="group"><i class="grip"></i>
      <label class="lbl help-lbl" for="help">Help</label><input class="box help" id="help" type="text"><button class="tb help-btn" aria-label="Search help"><svg><use href="#findhelp"/></svg></button>
    </div>
    <div class="group raised"><i class="grip"></i>
      <button class="tb" aria-label="Compile"><svg><use href="#stack"/></svg></button><button class="tb" aria-label="Compile out of date"><svg><use href="#dq"/></svg></button><button class="tb" aria-label="Compile all"><svg><use href="#gridarrows"/></svg></button><button class="tb" aria-label="Simulate"><svg><use href="#car"/></svg></button><button class="tb" aria-label="Break"><svg><use href="#docx"/></svg></button>
    </div>
    <div class="group"><i class="grip"></i>
      <button class="tb boxed" aria-label="Environment"><svg><use href="#boxes"/></svg></button><button class="tb" aria-label="Signal source"><svg><use href="#sigdoc"/></svg></button><button class="drop" aria-label="Source menu"></button><button class="tb" aria-label="Up"><svg><use href="#up"/></svg></button><button class="tb" aria-label="Back"><svg><use href="#left"/></svg></button><button class="tb" aria-label="Forward"><svg><use href="#right"/></svg></button><i class="sep"></i>
      <button class="tb" aria-label="Restart"><svg><use href="#restart"/></svg></button><input class="box runlen" type="text" value="20 us" aria-label="Run length"><span class="spin"><button class="su" aria-label="Increase"></button><button class="sd" aria-label="Decrease"></button></span>
      <button class="tb" aria-label="Run"><svg><use href="#run"/></svg></button><button class="tb" aria-label="Continue"><svg><use href="#runc"/></svg></button><button class="tb" aria-label="Run all"><svg><use href="#runall"/></svg></button><button class="tb" aria-label="Break run"><svg><use href="#docx"/></svg></button><button class="tb" aria-label="Stop"><svg><use href="#stop"/></svg></button><i class="sep"></i>
      <button class="tb" aria-label="Profiling off"><svg><use href="#noprof"/></svg></button><button class="tb boxed" aria-label="Performance profile"><svg><use href="#profp"/></svg></button><button class="tb boxed" aria-label="Memory profile"><svg><use href="#profm"/></svg></button><button class="tb" aria-label="Hand"><svg><use href="#hand"/></svg></button>
    </div>
    <div class="group raised"><i class="grip"></i>
      <button class="tb" aria-label="Step into"><svg><use href="#stepin"/></svg></button><button class="tb" aria-label="Step over"><svg><use href="#stepover"/></svg></button><button class="tb" aria-label="Step out"><svg><use href="#stepout"/></svg></button><i class="sep"></i><button class="tb" aria-label="Step into current"><svg><use href="#stepinc"/></svg></button><button class="drop" aria-label="Step into menu"></button><button class="tb" aria-label="Step over current"><svg><use href="#stepoverc"/></svg></button><button class="drop" aria-label="Step over menu"></button><button class="tb" aria-label="Step out current"><svg><use href="#stepoutc"/></svg></button>
    </div>
    <div class="group raised"><i class="grip"></i>
      <label class="lbl layout-lbl" for="layout">Layout</label><select class="box flat layout" id="layout"><option>Simulate</option></select><span class="pick"></span>
    </div>
    <div class="group raised off"><i class="grip"></i>
      <label class="lbl cols-lbl" for="cols">ColumnLayout</label><select class="box flat cols" id="cols" disabled><option>AllColumns</option></select><span class="pick"></span>
    </div>
    <div class="group raised"><i class="grip"></i>
      <button class="tb" aria-label="Add bookmark"><svg><use href="#fadd"/></svg></button><button class="drop" aria-label="Add bookmark menu"></button><button class="tb" aria-label="Delete bookmark"><svg><use href="#fdel"/></svg></button><button class="drop" aria-label="Delete bookmark menu"></button><button class="tb" aria-label="Edit bookmark"><svg><use href="#fedit"/></svg></button><button class="tb" aria-label="Save bookmark"><svg><use href="#fsave"/></svg></button><button class="drop" aria-label="Save bookmark menu"></button><button class="tb" aria-label="Go to bookmark"><svg><use href="#fgo"/></svg></button>
    </div>
  </div>
  <div class="bar bar-low">
    <div class="group"><i class="grip"></i>
      <button class="tb boxed on" aria-label="Inputs"><svg><use href="#li"/></svg></button><button class="tb boxed on" aria-label="Outputs"><svg><use href="#lo"/></svg></button><button class="tb boxed on" aria-label="Inouts"><svg><use href="#lio"/></svg></button><button class="tb boxed on" aria-label="Internal"><svg><use href="#lbox"/></svg></button><button class="tb boxed" aria-label="All"><svg><use href="#lall"/></svg></button><button class="tb" aria-label="Clear"><svg><use href="#pen"/></svg></button>
    </div>
    <div class="group"><i class="grip"></i>
      <button class="tb boxed on" aria-label="Select"><svg><use href="#arrow"/></svg></button><button class="tb boxed" aria-label="Zoom mode"><svg><use href="#zbox"/></svg></button><button class="tb boxed" aria-label="Pan mode"><svg><use href="#pan"/></svg></button><button class="tb boxed" aria-label="Two cursor"><svg><use href="#twocur"/></svg></button><button class="tb boxed" aria-label="Edit mode"><svg><use href="#editm"/></svg></button><i class="sep"></i><button class="tb" aria-label="Stop drawing"><svg><use href="#traffic"/></svg></button>
    </div>
    <div class="group raised"><i class="grip"></i>
      <button class="tb" aria-label="Insert cursor"><svg><use href="#curadd"/></svg></button><button class="tb" aria-label="Delete cursor"><svg><use href="#curdel"/></svg></button><button class="tb" aria-label="Previous transition"><svg><use href="#e1"/></svg></button><button class="tb" aria-label="Next transition"><svg><use href="#e2"/></svg></button><button class="tb" aria-label="Previous falling edge"><svg><use href="#e3"/></svg></button><button class="tb" aria-label="Next falling edge"><svg><use href="#e4"/></svg></button><button class="tb" aria-label="Previous rising edge"><svg><use href="#e5"/></svg></button><button class="tb" aria-label="Next rising edge"><svg><use href="#e6"/></svg></button>
    </div>
    <div class="group raised"><i class="grip"></i>
      <button class="tb" aria-label="Drivers"><svg><use href="#x1"/></svg></button><button class="drop" aria-label="Drivers menu"></button><button class="tb" aria-label="Readers"><svg><use href="#x2"/></svg></button><button class="drop" aria-label="Readers menu"></button><button class="tb" aria-label="Trace"><svg><use href="#x3"/></svg></button><i class="sep"></i>
      <label class="lbl search-lbl" for="search">Search:</label><input class="box search" id="search" type="text"><span class="pick"></span>
      <button class="tb find-btn" aria-label="Find previous"><svg><use href="#fprev"/></svg></button><button class="tb" aria-label="Find next"><svg><use href="#fnext"/></svg></button><button class="tb find-btn" aria-label="Search options"><svg><use href="#fopt"/></svg></button>
    </div>
    <div class="group raised"><i class="grip"></i>
      <button class="tb" aria-label="Zoom in"><svg><use href="#zin"/></svg></button><button class="tb" aria-label="Zoom out"><svg><use href="#zout"/></svg></button><button class="tb" aria-label="Zoom full"><svg><use href="#zfull"/></svg></button><button class="tb" aria-label="Zoom on cursor"><svg><use href="#zcur"/></svg></button><button class="tb" aria-label="Zoom between cursors"><svg><use href="#zbet"/></svg></button><button class="tb" aria-label="Zoom other window"><svg><use href="#zoth"/></svg></button>
    </div>
    <div class="group"><i class="grip"></i>
      <button class="tb boxed on" aria-label="Event off"><svg><use href="#w1"/></svg></button><button class="tb boxed" aria-label="Delta collapsed"><svg><use href="#w2"/></svg></button><button class="tb boxed" aria-label="Delta expanded"><svg><use href="#w3"/></svg></button><i class="sep"></i><button class="tb" aria-label="Expand all time"><svg><use href="#w4"/></svg></button><button class="tb" aria-label="Expand at cursor"><svg><use href="#w5"/></svg></button><button class="tb" aria-label="Collapse all time"><svg><use href="#w6"/></svg></button><button class="tb" aria-label="Collapse at cursor"><svg><use href="#w7"/></svg></button>
    </div>
    <div class="group"><i class="grip"></i>
      <button class="tb" aria-label="Previous difference"><svg><use href="#xl"/></svg></button><button class="tb" aria-label="Next difference"><svg><use href="#xr"/></svg></button><button class="tb boxed" aria-label="Difference report"><svg><use href="#dx"/></svg></button><button class="tb" aria-label="Clear differences"><svg><use href="#xp"/></svg></button>
    </div>
    <div class="group"><i class="grip"></i>
      <button class="tb" aria-label="Insert pulse"><svg><use href="#k1"/></svg></button><button class="tb" aria-label="Move edge left"><svg><use href="#k2"/></svg></button><button class="tb" aria-label="Move edge right"><svg><use href="#k3"/></svg></button><button class="tb" aria-label="Delete edge"><svg><use href="#k4"/></svg></button><button class="tb" aria-label="Stretch edge"><svg><use href="#k5"/></svg></button><button class="tb" aria-label="Mirror"><svg><use href="#k6"/></svg></button><button class="tb" aria-label="Extend"><svg><use href="#k7"/></svg></button><i class="sep"></i><button class="tb" aria-label="Apply"><svg><use href="#loop"/></svg></button><button class="drop small" aria-label="Apply menu"></button><button class="tb" aria-label="Remove"><svg><use href="#bigx"/></svg></button><button class="drop small" aria-label="Remove menu"></button><button class="tb" aria-label="Settings"><svg><use href="#gear"/></svg></button><i class="sep"></i><button class="tb boxed" aria-label="Memory view"><svg><use href="#m1"/></svg></button><button class="tb boxed" aria-label="Wave view"><svg><use href="#m2"/></svg></button>
    </div>
  </div>
  <svg class="markup" aria-hidden="true"><path d="M40 5Q28 1 16 7 5 15 4 29 4 35 10 38 22 38 40 40 49 34 49 20 47 9 36 4"/><path d="M140 40l10-1 18-1"/></svg>
</header>

<main class="window">
  <div class="title">
    <svg class="title-icon"><use href="#wave"/></svg><h1>Wave - Default</h1>
    <span class="rails"></span><span class="knurl"></span><span class="rails end"></span>
    <button class="wb" aria-label="Minimize"><svg viewBox="0 0 14 16"><path d="M2 8h10" stroke="#000" stroke-width="3"/></svg></button>
    <button class="wb" aria-label="Undock"><svg viewBox="0 0 14 16"><path d="M2 7h6v7H2zM6 9l6-6M7 2h5v5" fill="none" stroke="#000" stroke-width="2"/></svg></button>
    <button class="wb" aria-label="Close"><svg viewBox="0 0 14 16"><path d="M2 3l10 10M12 3L2 13" stroke="#000" stroke-width="2"/></svg></button>
  </div>
  <div class="panes">
    <div class="cell head"><svg class="head-icon"><use href="#objs"/></svg><button class="drop" aria-label="Column menu"></button></div>
    <div class="cell head msgs">Msgs</div>
    <div class="cell black"><svg id="cursor-head"></svg></div>
    <div class="cell"></div>

    <div class="cell names"><ul id="names"></ul><div class="insert"></div></div>
    <div class="cell values"><ul id="values"></ul><div class="insert plain"></div></div>
    <div class="cell black"><svg id="plot"></svg></div>
    <div class="vscroll"><button class="sb up" aria-label="Scroll up"></button><button class="sb down" aria-label="Scroll down"></button></div>

    <div class="cell foot">
      <div class="foot-row"><span class="foot-icons"><svg><use href="#lib"/></svg><svg><use href="#note"/></svg><svg><use href="#add"/></svg></span><span class="foot-text">Now</span></div>
      <div class="foot-row"><span class="foot-icons"><svg><use href="#lock"/></svg><svg><use href="#wrench"/></svg><svg><use href="#minus"/></svg></span><span class="foot-text lit">Cursor 1</span></div>
    </div>
    <div class="cell foot">
      <div class="foot-row"><span class="foot-text val">20000000 ps</span></div>
      <div class="foot-row"><span class="foot-text val lit">165100 ps</span></div>
    </div>
    <div class="cell black"><svg id="ruler"></svg></div>
    <div class="cell"></div>

    <div class="cell hs-names"><div class="hscroll off"><button class="sb lt" aria-label="Names left"></button><button class="sb rt" aria-label="Names right"></button></div></div>
    <div class="hscroll off"><button class="sb lt" aria-label="Values left"></button><button class="sb rt" aria-label="Values right"></button></div>
    <div class="hscroll wide"><button class="sb lt" aria-label="Wave left"></button><i class="thumb"></i><button class="sb rt" aria-label="Wave right"></button></div>
    <div class="cell"></div>
  </div>
</main>

<nav class="tabs">
  <a class="tab t1" href="#transcript"><svg><use href="#trans"/></svg><span>Transcript</span><b>×</b></a>
  <a class="tab current t2" href="#wavetab"><svg><use href="#wave"/></svg><span>Wave</span><b>×</b></a>
  <a class="tab t3" href="#dataflow"><svg><use href="#flow"/></svg><span>Dataflow</span><b>×</b></a>
  <a class="tab t4" href="#objects"><svg><use href="#objs"/></svg><span>Objects</span><b>×</b></a>
  <a class="tab t5" href="#processes"><svg><use href="#cog"/></svg><span>Processes</span><b>×</b></a>
  <a class="tab t6" href="#memory"><svg><use href="#mem"/></svg><span>Memory List</span><b>×</b></a>
  <a class="tab t7" href="#sim"><svg><use href="#car"/></svg><span>sim</span><b>×</b></a>
  <span class="tab-arrows"><button aria-label="Tabs left">«</button><button aria-label="Tabs right">»</button></span>
</nav>
<footer class="status">
  <div class="stat now">Now: 20 us&nbsp; Delta: 2</div>
  <div class="stat path">sim:/tb_sign_uw_inserter</div>
  <div class="stat range">82031 ps to 246095 ps</div>
  <svg class="size-grip" viewBox="0 0 16 16"><path d="M2 16L16 2M7 16l9-9M12 16l4-4" stroke="#888" stroke-width="1.500"/></svg>
</footer>

<aside class="upload"><span class="upload-icon"><svg viewBox="0 0 30 26"><g fill="none" stroke="#fff" stroke-width="4"><circle cx="15" cy="8" r="5.500"/><circle cx="8" cy="18" r="5.500"/><circle cx="22" cy="18" r="5.500"/></g></svg></span><span class="upload-text" lang="zh">拖拽</span></aside>
<script src="wave.js"></script>
</body>
</html>
```
FILE: styles.css
```css
* { box-sizing: border-box; }

body {
  margin: 0;
  min-height: 100vh;
  display: flex;
  flex-direction: column;
  background: #efefef;
  color: #000;
  font: 13px/20px "DejaVu Sans Condensed", "Noto Sans", "Noto Sans CJK SC", sans-serif;
  position: relative;
  overflow-x: hidden;
}

button { padding: 0; border: 0; background: none; font: inherit; }
svg { display: block; }
.defs { position: absolute; width: 0; height: 0; }

/* Toolbars */
.toolbars { position: relative; border-bottom: 1px solid #a8a8a8; height: 83px; }
.bar { display: grid; column-gap: 2px; height: 40px; }
.bar-top { grid-template-columns: 429px 186px 157px 591px 222px 258px 415px 192px; }
.bar-low { grid-template-columns: 212px 224px 241px 457px 185px 241px 136px 411px; }
.group {
  display: flex;
  align-items: center;
  padding-left: 4px;
  border-right: 2px solid #8c8c8c;
  border-bottom: 2px solid #8c8c8c;
  border-top: 1px solid #fdfdfd;
}
.raised > .tb, .raised > .drop, .raised > .lbl { margin-bottom: 4px; }
.grip { align-self: stretch; width: 3px; margin: 2px 8px 2px 0; border: 1px solid #8c8c8c; border-left-color: #fff; border-top: 0; }
.tb { flex: none; width: 27px; height: 24px; display: grid; place-items: center; }
.tb svg { width: 25px; height: 22px; }
.tb.boxed { width: 24px; margin: 0 4px; border: 1px solid #fff; border-right: 2px solid #909090; border-bottom: 2px solid #909090; }
.tb.boxed svg { width: 21px; height: 21px; }
.tb.boxed.on { background: #fff; border: 1px solid #dcdcdc; border-left: 2px solid #909090; border-top: 2px solid #909090; }
.drop { flex: none; width: 13px; height: 24px; display: grid; place-items: center; }
.drop::before { content: ""; border: 4px solid transparent; border-top: 5px solid #000; border-bottom: 0; }
.drop.small::before { border-width: 3px; border-bottom: 0; }
.sep { flex: none; width: 15px; height: 19px; margin-bottom: 2px; background: radial-gradient(#333 40%, transparent 60%) center / 2px 2px repeat-y; }
.lbl { flex: none; }
.box {
  height: 24px;
  padding: 0 2px;
  background: #fff;
  border: 2px solid #b4b4b4;
  border-right-color: #fff;
  border-bottom-color: #fff;
  border-radius: 0;
  font: 14px/20px "Liberation Mono", monospace;
  color: #333;
}
.flat { appearance: none; background: #efefef; opacity: 1; }
.pick {
  flex: none;
  width: 21px;
  height: 22px;
  margin-left: 3px;
  display: grid;
  place-items: center;
  border: 1px solid #fff;
  border-right: 2px solid #888;
  border-bottom: 2px solid #888;
}
.pick::before { content: ""; border: 8px solid transparent; border-top: 9px solid #000; border-bottom: 0; }
.off .lbl, .off .flat { color: #8a8a8a; }
.off .pick::before { border-width: 6px; border-bottom: 0; border-top: 7px solid #777; }
.help-lbl { width: 34px; padding-left: 5px; }
.help { width: 92px; margin-left: 5px; }
.help-btn { margin-left: 4px; }
.runlen { width: 73px; margin-left: 7px; text-align: right; }
.spin { width: 18px; height: 23px; margin: 0 4px 0 1px; display: grid; grid-template-rows: 1fr 1fr; border-right: 2px solid #888; border-bottom: 2px solid #888; }
.spin button { display: grid; place-items: center; }
.spin button + button { border-top: 1px solid #999; }
.su::before, .sd::before { content: ""; border: 4px solid transparent; border-top: 0; border-bottom: 5px solid #000; }
.sd::before { border-bottom: 0; border-top: 5px solid #000; }
.layout-lbl { width: 53px; padding-left: 4px; }
.layout { width: 154px; }
.cols-lbl { width: 96px; padding-left: 4px; }
.cols { width: 267px; }
.search-lbl { width: 56px; padding-left: 3px; }
.search { width: 144px; }
.find-btn { margin-left: 1px; }
.markup { position: absolute; left: 950px; top: 3px; width: 180px; height: 46px; fill: none; stroke: #ff5650; stroke-width: 5px; stroke-linecap: round; stroke-linejoin: round; }

/* Wave window */
.window { flex: 1; display: flex; flex-direction: column; padding: 1px 6px 0 4px; border-bottom: 2px solid #9a9a9a; }
.title { display: flex; align-items: center; height: 22px; background: #99b4d1; }
.title-icon { width: 19px; height: 19px; }
h1 { margin: 0 8px 0 5px; font: inherit; }
.rails {
  flex: 1;
  height: 10px;
  background: linear-gradient(#c4e2f0 2px, #99b4d1 2px 3px, #0c1420 3px 4px, #99b4d1 4px 6px, #c4e2f0 6px 8px, #0c1420 8px 9px, #99b4d1 9px);
}
.rails.end { border-right: 1px solid #0c1420; }
.knurl {
  width: 28px;
  height: 12px;
  background:
    radial-gradient(circle at 1px 1px, #f4faff 1px, transparent 1px) 0 0 / 4px 4px,
    radial-gradient(circle at 3px 2px, #1c2c40 1px, transparent 1px) 0 0 / 4px 4px,
    #99b4d1;
}
.wb { width: 15px; height: 17px; margin-left: 5px; background: #efefef; border-right: 1px solid #888; border-bottom: 1px solid #888; }
.wb svg { width: 14px; height: 16px; }

.panes {
  flex: 1;
  display: grid;
  grid-template-columns: 199px 125px minmax(0, 1fr) 21px;
  grid-template-rows: 22px 1fr 48px 21px;
  gap: 4px 3px;
  padding: 3px 0 6px;
  background: #fff;
}
.cell { background: #808080; color: #fff; box-shadow: 0 0 0 1px #b0b0b0; position: relative; }
.black { background: #000; }
.black svg { width: 100%; height: 100%; position: absolute; }
.head { display: flex; align-items: center; }
.head-icon { width: 22px; height: 21px; margin: 0 0 0 12px; }
.msgs { justify-content: flex-end; padding-right: 7px; }
.names { border-left: 11px solid #fff; }
ul { list-style: none; margin: 0; padding: 3px 0 0; height: 811px; display: grid; grid-template-rows: repeat(38, 1fr); }
li { display: flex; align-items: center; padding: 0 0 1px 3px; overflow: hidden; white-space: nowrap; }
.names li { padding-left: 6px; }
.expander { width: 19px; display: flex; align-items: center; }
.expander button { width: 13px; height: 13px; background: #fff; border: 1px solid #c8cce0; color: #000; display: grid; place-items: center; }
.expander button::before { content: ""; width: 7px; height: 7px; background: linear-gradient(#000, #000) center / 7px 1px no-repeat, linear-gradient(#000, #000) center / 1px 7px no-repeat; }
.expander::after { content: ""; flex: 1; height: 1px; background: #d0d0d0; }
.expander.none { visibility: hidden; }
.sig-icon { width: 18px; height: 19px; margin-right: 6px; }
li.picked { background: #fff; color: #000; }
.insert { height: 2px; margin: 0 5px 0 7px; background: #111; position: relative; }
.insert::before { content: ""; position: absolute; left: -4px; top: -3px; border: 4px solid transparent; border-left: 4px solid #111; border-right: 0; }
.insert.plain { margin-left: 3px; }
.insert.plain::before { content: none; }

.foot { display: grid; grid-template-rows: 27px 21px; }
.foot-row { display: flex; }
.foot-icons { display: flex; align-items: center; width: 61px; padding-left: 10px; }
.foot-icons svg { width: 16px; height: 17px; }
.foot-text { flex: 1; display: flex; align-items: center; justify-content: flex-end; padding-right: 13px; }
.lit { background: #fff; color: #000; }
.hs-names { padding-left: 11px; }

.hscroll { display: flex; height: 21px; background: #c8c8c8; border-top: 1px solid #999; }
.hscroll.off { background: #f7f7f7; }
.hscroll.wide { padding: 0 3px; }
.sb { width: 20px; height: 20px; background: #efefef; border: 1px solid #fff; border-right: 2px solid #888; border-bottom: 2px solid #888; display: grid; place-items: center; }
.sb::before { content: ""; border: 5px solid transparent; }
.sb.lt::before { border-left: 0; border-right: 5px solid #000; }
.sb.rt::before { border-right: 0; border-left: 5px solid #000; }
.off .sb.lt::before { border-right-color: #999; }
.off .sb.rt::before { border-left-color: #999; }
.rt { margin-left: auto; }
.thumb { width: 17px; margin-left: 7px; background: linear-gradient(#ffd94a, #ffd94a) 9px 0 / 2px 100% no-repeat #efefef; border: 1px solid #fff; border-right: 2px solid #888; }
.vscroll { display: flex; flex-direction: column; justify-content: space-between; background: #efefef; border-right: 2px solid #999; }
.sb.up::before { border-top: 0; border-bottom: 6px solid #000; }
.sb.down::before { border-bottom: 0; border-top: 6px solid #000; }
.grid-line { stroke: #787878; }
.bit { stroke: #2fd811; stroke-width: 1.500px; fill: none; }
.bus { stroke: #9ce89c; stroke-width: 1.500px; fill: none; }
.undef { stroke: #d40000; stroke-width: 1.500px; }
.zline { stroke: #e4e4e4; stroke-width: 1.500px; fill: none; }
.dash { stroke-dasharray: 22 8; }
.cursor { stroke: #ffd400; stroke-width: 4px; }
.bus-text { fill: #fff; }
.tick { stroke: #2ae00c; stroke-width: 1.500px; }
.tick-text { fill: #24e80c; text-anchor: middle; }
.rule { stroke: #808080; }
.flag { fill: #000; stroke: #e0b400; stroke-width: 2px; }
.flag-text { fill: #e0b400; text-anchor: middle; }

/* Tabs and status line */
.tabs { display: flex; height: 28px; padding-right: 2px; border-top: 1px solid #000; }
.tab {
  display: flex;
  align-items: center;
  height: 24px;
  padding-left: 8px;
  background: #cacaca;
  border: 1px solid #222;
  border-top: 0;
  border-bottom-width: 2px;
  border-radius: 0 0 4px 4px;
  color: #000;
  text-decoration: none;
  white-space: nowrap;
}
.tab svg { width: 18px; height: 19px; margin-right: 4px; }
.tab b { margin-left: auto; padding-right: 4px; color: #999; font: 700 16px/20px "DejaVu Sans", sans-serif; }
.current { background: #efefef; }
.t1 { width: 115px; } .t2 { width: 90px; } .t3 { width: 109px; } .t4 { width: 100px; }
.t5 { width: 115px; } .t6 { width: 126px; } .t7 { width: 74px; }
.tab-arrows { display: flex; gap: 2px; margin-left: auto; }
.tab-arrows button { width: 12px; height: 20px; background: #efefef; border-right: 1px solid #888; border-bottom: 2px solid #888; }
.status { display: flex; gap: 6px; padding: 2px 2px 2px 3px; }
.stat { height: 23px; padding: 1px 2px; border: 1px solid #a0a0a0; border-right-color: #fff; border-bottom-color: #fff; }
.now { width: 246px; }
.path { flex: 1; }
.range { width: 214px; padding-left: 7px; }
.size-grip { width: 14px; height: 14px; align-self: flex-end; }

/* Upload badge over the window edge */
.upload { position: absolute; top: 128px; right: 0; width: 82px; height: 47px; display: flex; align-items: center; overflow: hidden; background: #f0f8ff; border: 1px solid #0b98ff; border-right: 0; border-radius: 8px 0 0 8px; }
.upload-icon { flex: none; width: 45px; height: 47px; display: grid; place-items: center; background: linear-gradient(45deg, #36b4ff, #0a92ff 60%); border-radius: 8px; }
.upload-icon svg { width: 27px; height: 24px; }
.upload-text { flex: none; margin-left: 9px; font-size: 17px; color: #0a9bff; white-space: nowrap; }
```
FILE: wave.js
```javascript
const START = 82031, END = 246095, CURSOR = 165100, PITCH = 21.25;

const clk = { kind: "clk" };
const high = { kind: "bit", level: 1 };
const low = { kind: "bit", level: 0 };
const rise = at => ({ kind: "bit", level: 0, at });
const fall = at => ({ kind: "bit", level: 1, at });
const bus = (...segs) => ({ kind: "bus", segs });
const hold = text => bus([START, text]);
const count = (from, label, n) => {
  const segs = Array.from({ length: n }, (_, k) => [from + k * 10000, label(k)]);
  segs.push([245000, ""]);
  return segs;
};

const symI = bus([START, "0000"], ...count(155000, k => "a00" + k, 9));
const symQ = bus([START, "0000"], ...count(155000, k => "b00" + k, 9));

// name, value, icon, expandable, wave
const signals = [
  ["clk", "1'h1", "", 0, clk],
  ["rst_n", "1'h1", "", 0, rise(100000)],
  ["sign_symbmod_i", "16'ha001", "", 1, symI],
  ["sign_symbmod_q", "16'hb001", "", 1, symQ],
  ["sign_symbmod_valid", "1'h1", "", 0, rise(155000)],
  ["sign_symbmod_ready", "1'h1", "", 0, high],
  ["sign_uw_i", "16'h0000", "", 1, hold("0000")],
  ["sign_uw_q", "16'h0000", "", 1, hold("0000")],
  ["sign_uw_valid", "1'h0", "", 0, low],
  ["sign_uw_ready", "1'h1", "", 0, high],
  ["i", "32'h00000001", "", 1, { kind: "bus", undef: 155000, segs: count(155000, k => "0000000" + k, 9) }],
  ["GSR", "1'h0", "", 0, { kind: "z", at: 100000 }],
  ["state_idle", "3'h1", "", 0, hold("1")],
  ["state_head_uw", "3'h2", "", 0, hold("2")],
  ["state_data", "3'h3", "", 0, hold("3")],
  ["state_last_uw", "3'h4", "", 0, hold("4")],
  ["uw_len", "32'd128", "", 0, hold("128")],
  ["data_len", "32'd768", "", 0, hold("768")],
  ["clk", "1'h1", "-in", 0, clk],
  ["rst_n", "1'h1", "-in", 0, rise(100000)],
  ["sign_symbmod_i", "16'ha001", "-in", 1, symI],
  ["sign_symbmod_q", "16'hb001", "-in", 1, symQ],
  ["sign_symbmod_valid", "1'h1", "-in", 0, rise(155000)],
  ["sign_symbmod_ready", "1'h1", "-out", 0, high],
  ["sign_uw_i", "16'h0000", "-out", 1, hold("0000")],
  ["sign_uw_q", "16'h0000", "-out", 1, hold("0000")],
  ["sign_uw_valid", "1'h0", "-out", 0, low],
  ["sign_uw_ready", "1'h1", "-in", 0, high],
  ["fifo_sign_count", "13'd1", "", 1, bus([START, "0"], ...count(165000, k => String(k + 1), 8)), true],
  ["sign_rd_en", "1'h0", "", 0, low],
  ["sign_empty", "1'h1", "", 0, fall(185000)],
  ["sign_fifo_dout", "32'h00000000", "", 1, bus([START, "00000000"], [185000, "b000a000"])],
  ["tx_state", "3'h1", "", 1, hold("1")],
  ["tx_nextstate", "3'h1", "", 1, hold("1")],
  ["cnt", "10'h000", "", 1, hold("000")],
  ["rom_addr", "7'h00", "", 1, hold("00")],
  ["next_rom_addr", "7'h01", "", 1, hold("01")],
  ["rom_data_out", "32'h00000000", "", 1, hold("00000000")]
];

const byId = id => document.getElementById(id);

byId("names").innerHTML = signals.map(([name, , icon, exp, , picked]) =>
  `<li class="${picked ? "picked" : ""}"><span class="expander${exp ? "" : " none"}"><button aria-label="Expand ${name}"></button></span>` +
  `<svg class="sig-icon"><use href="#dia${icon}"/></svg>${name}</li>`).join("");
byId("values").innerHTML = signals.map(([, value, , , , picked]) =>
  `<li class="${picked ? "picked" : ""}">${value}</li>`).join("");

function draw() {
  const box = byId("plot").getBoundingClientRect();
  const W = box.width, H = box.height;
  const X = t => 5 + (t - START) / (END - START) * (W - 10);
  const right = X(END);
  const path = (cls, d) => `<path class="${cls}" d="${d}"/>`;
  const text = (cls, x, y, s) => `<text class="${cls}" x="${x}" y="${y}">${s}</text>`;
  let out = "";

  for (let t = 85000; t < END; t += 5000) out += path("grid-line", `M${X(t)} 0V${H}`);

  signals.forEach(([, , , , w], row) => {
    const hi = 6 + row * PITCH, lo = hi + 15, mid = hi + 7.5;
    const y = level => level ? hi : lo;
    if (w.kind === "clk") {
      let d = `M${X(START)} ${lo}`;
      for (let t = 85000, up = true; t < END; t += 5000, up = !up) d += `H${X(t)}V${up ? hi : lo}`;
      out += path("bit", d + `H${right}`);
    } else if (w.kind === "bit") {
      let d = `M${X(START)} ${y(w.level)}`;
      if (w.at) d += `H${X(w.at)}V${y(1 - w.level)}`;
      out += path("bit", d + `H${right}`);
    } else if (w.kind === "z") {
      out += path("bit", `M${X(START)} ${hi}H${X(w.at)}`);
      out += path("zline", `M${X(w.at)} ${hi}V${lo}`) + path("zline dash", `M${X(w.at)} ${lo}H${right}`);
    } else {
      if (w.undef) out += path("undef", `M${X(START)} ${mid}H${X(w.undef)}`);
      w.segs.forEach(([t, label], k) => {
        const a = X(t), b = k + 1 < w.segs.length ? X(w.segs[k + 1][0]) : right + 1;
        out += path("bus", `M${a} ${hi}H${b}M${a} ${lo}H${b}`);
        if (t !== START) out += path("bus", `M${a - 1} ${hi}L${a + 1} ${hi + 4}V${lo - 4}L${a - 1} ${lo}M${a + 1} ${hi}L${a - 1} ${hi + 4}M${a + 1} ${lo}L${a - 1} ${lo - 4}`);
        out += text("bus-text", a + (t === START ? 6 : 5), hi + 12, label);
      });
    }
  });
  out += path("cursor", `M${X(CURSOR)} 0V${H}`);
  byId("plot").innerHTML = out;
  byId("cursor-head").innerHTML = path("cursor", `M${X(CURSOR)} 2V22`);

  let rule = path("rule", `M4 27.5H${right}`);
  for (let t = 82500; t < END; t += 500) rule += path("tick", `M${X(t)} ${t % 5000 ? 3 : 0}V8`);
  for (let t = 90000; t < END; t += 10000) rule += text("tick-text", X(t), 25, t + " ps");
  rule += path("cursor", `M${X(CURSOR)} 0V27`);
  rule += `<rect class="flag" x="${X(CURSOR) - 33}" y="29" width="67" height="18"/>`;
  rule += text("flag-text", X(CURSOR), 43, CURSOR + " ps");
  byId("ruler").innerHTML = rule;
}

draw();
addEventListener("resize", draw);
```
